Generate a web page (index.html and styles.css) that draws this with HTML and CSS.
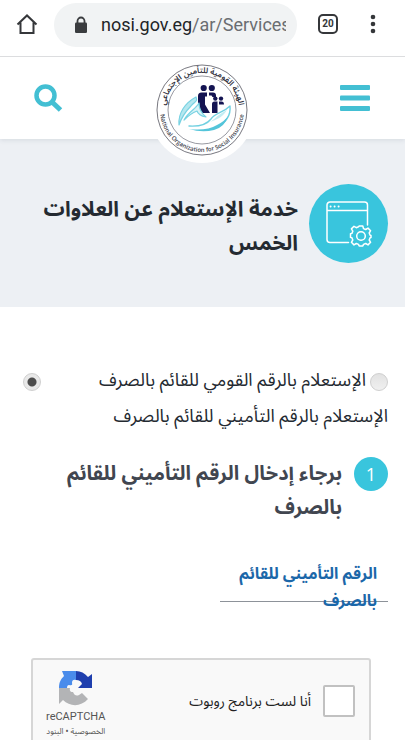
FILE: index.html
```html
<!DOCTYPE html>
<html lang="ar" dir="rtl">
<head>
<meta charset="utf-8">
<meta name="viewport" content="width=device-width, initial-scale=1">
<title>خدمة الإستعلام عن العلاوات الخمس</title>
<link rel="stylesheet" href="styles.css">
</head>
<body>
<div class="browser-bar" dir="ltr">
  <button class="bar-button" type="button" aria-label="Home">
    <svg width="24" height="24" viewBox="0 0 24 24"><path d="M2.500 12.500 12 3.500l9.500 9M5.500 10.500V21h13V10.500" fill="none" stroke="#35373a" stroke-width="2"/></svg>
  </button>
  <a class="address" href="#">
    <svg class="lock" width="14" height="18" viewBox="0 0 14 18"><path d="M3.500 7V5a3.500 3.500 0 0 1 7 0v2" fill="none" stroke="#3a3c3f" stroke-width="1.800"/><rect x="1" y="6.500" width="12" height="10.500" rx="1.300" fill="#3a3c3f"/></svg>
    <span class="url">nosi.gov.eg<span class="url-path">/ar/Services</span></span>
  </a>
  <button class="tab-count" type="button" aria-label="Tabs">20</button>
  <button class="bar-button bar-more" type="button" aria-label="More">
    <svg width="6" height="20" viewBox="0 0 6 20"><g fill="#35373a"><circle cx="3" cy="3" r="2.300"/><circle cx="3" cy="10" r="2.300"/><circle cx="3" cy="17" r="2.300"/></g></svg>
  </button>
</div>

<div class="page">
  <header class="site-header">
    <button class="bar-button" type="button" aria-label="القائمة">
      <svg width="30" height="26" viewBox="0 0 30 26"><g fill="#43bfd3"><rect width="30" height="5" rx="1"/><rect y="10.500" width="30" height="5" rx="1"/><rect y="21" width="30" height="5" rx="1"/></g></svg>
    </button>
    <a class="logo" href="#" aria-label="الهيئة القومية للتأمين الاجتماعي">
      <svg class="logo-art" viewBox="0 0 92 92" direction="ltr">
        <defs>
          <path id="arc-top" d="M9 46A37 37 0 1 1 83 46"/>
          <path id="arc-bottom" d="M4 46A42 42 0 0 0 88 46"/>
        </defs>
        <circle cx="46" cy="46" r="45" fill="#fff" stroke="#55565f" stroke-width=".8"/>
        <circle cx="46" cy="46" r="34" fill="none" stroke="#6c6d78" stroke-width=".7"/>
        <text class="logo-arabic" text-anchor="middle"><textPath href="#arc-top" startOffset="50%">الهيئة القومية للتأمين الإجتماعي</textPath></text>
        <text class="logo-latin" text-anchor="middle"><textPath href="#arc-bottom" startOffset="50%">National Organization for Social Insurance</textPath></text>
        <g fill="#141452">
          <circle cx="47.700" cy="24" r="3.100"/><circle cx="55.800" cy="24" r="3.100"/>
          <path d="M42 41v-9q0-3.500 3.500-3.500H51v4h-2v8l5 8.500h-8z"/>
          <path d="M53 28.500h4q3 0 3 3v1.500h-3.500l-1-1.500H53z"/>
          <circle cx="59.300" cy="34.600" r="2.200"/><circle cx="65" cy="34.600" r="2.200"/>
          <path d="M56 49V40q0-2.500 2.500-2.500h3V49zM63 37.500h2.500q2.500 0 2.500 3h-5z"/>
        </g>
        <g fill="none" stroke-linecap="round" stroke-linejoin="round">
          <path d="M23 61C22 49 29 39 40 33c2 5-1 4-5 9-5 5-9 10-12 19z" fill="#b5e7ef" stroke="#78d2e2" stroke-width="1.200"/>
          <path d="M28 56c4-8 12-11 15-17 0 6 2 10 7 14-5-1-8-3-9-6-5 2-8 4-13 9z" fill="#d9f3f7" stroke="#78d2e2" stroke-width="1.200"/>
          <path d="M33 62q16 1 22-7c4-6 12-6 19-13 1 9-4 17-13 21" stroke="#70d0e1" stroke-width="1.400"/>
          <path d="M51 59c6-1 8-7 20-13-3 5-7 9-20 13z" fill="#c3edf3"/>
          <path d="M33 65q18 2 28-4 8-4 11-9-3 11-14 14-12 3-25-1z" fill="#54c5da"/>
        </g>
      </svg>
    </a>
    <button class="bar-button" type="button" aria-label="بحث">
      <svg width="29" height="29" viewBox="0 0 29 29" fill="none" stroke="#43bfd3"><circle cx="11.500" cy="11.500" r="9" stroke-width="4.500"/><path d="m18 18 8.500 8" stroke-width="5"/></svg>
    </button>
  </header>

  <section class="hero">
    <span class="hero-icon">
      <svg width="46" height="46" viewBox="0 0 46 46" fill="none" stroke="#fff" stroke-width="1.500" stroke-linejoin="round" stroke-linecap="round">
        <path d="M22.500 41.500H4a3 3 0 0 1-3-3V4a3 3 0 0 1 3-3h34.500a3 3 0 0 1 3 3v20M1 9.500h40.500"/>
        <path d="M4.500 5.500h.2M8.500 5.500h.2M12.500 5.500h.2" stroke-width="1.800"/>
        <circle cx="35" cy="35" r="4.300"/>
        <path d="M33.200 25h3.600l.7 2.600 2.200.9 2.300-1.400 2.600 2.600-1.400 2.300.9 2.200.9.200v2.200l-.9.200-.9 2.200 1.400 2.300-2.600 2.600-2.300-1.400-2.200.9-.7 1.600h-3.600l-.7-1.600-2.200-.9-2.300 1.400-2.600-2.600 1.400-2.300-.9-2.200-1.400-.4v-3.600l1.400-.4.900-2.200-1.400-2.300 2.600-2.600 2.300 1.400 2.200-.9z"/>
      </svg>
    </span>
    <h1 class="hero-title">خدمة الإستعلام عن العلاوات الخمس</h1>
  </section>

  <main class="content">
    <form class="form">
      <fieldset class="choices">
        <input class="radio" type="radio" name="method" id="by-national">
        <label class="choice" for="by-national">الإستعلام بالرقم القومي للقائم بالصرف</label>
        <input class="radio" type="radio" name="method" id="by-insurance" checked>
        <label class="choice choice-wide" for="by-insurance">الإستعلام بالرقم التأميني للقائم بالصرف</label>
      </fieldset>

      <div class="step">
        <span class="step-number">1</span>
        <h2 class="step-title">برجاء إدخال الرقم التأميني للقائم بالصرف</h2>
      </div>

      <div class="field">
        <label class="field-label" for="insurance-number">الرقم التأميني للقائم بالصرف</label>
        <input class="field-input" type="text" id="insurance-number">
      </div>

      <div class="captcha">
        <input class="captcha-box" type="checkbox" id="not-robot">
        <label class="captcha-label" for="not-robot">أنا لست برنامج روبوت</label>
        <div class="captcha-brand">
          <svg width="36" height="36" viewBox="0 0 36 36">
            <path d="M1 18C1 12 3 9 6 6L4 1h14v9q-4-1-4 3 1 3-3 2-2 0-2 3z" fill="#4a8ceb"/>
            <path d="M18 1q7 0 12 6l4-3v14H20l4-4q-1-4-6-4z" fill="#1f3fae"/>
            <path d="M1 18h11q-1 4 3 4 2 5 6 3l3-2 6 6C23 37 12 37 5 30l-4 4z" fill="#b3b4b6"/>
          </svg>
          <span class="captcha-name">reCAPTCHA</span>
          <span class="captcha-links"><a href="#">الخصوصية</a> • <a href="#">البنود</a></span>
        </div>
      </div>
    </form>
  </main>
</div>
</body>
</html>
```
FILE: styles.css
```css
* {
  box-sizing: border-box;
}

body {
  margin: 0;
  height: 100vh;
  display: flex;
  flex-direction: column;
  overflow: hidden;
  background: #fff;
  color: #242a31;
  font-family: "Noto Sans Arabic", "DejaVu Sans", sans-serif;
}

a {
  color: inherit;
  text-decoration: none;
}

button {
  padding: 0;
  border: 0;
  background: none;
  font: inherit;
}

svg {
  display: block;
}

/* Browser toolbar */
.browser-bar {
  flex: none;
  display: flex;
  align-items: center;
  height: 56px;
  padding: 0 29px 8px 15px;
  font-family: Roboto, sans-serif;
}

.address {
  flex: 1;
  min-width: 0;
  display: flex;
  align-items: center;
  gap: 13px;
  height: 44px;
  margin: 2px 21px 0 15px;
  padding: 0 11px 0 20px;
  border-radius: 22px;
  background: #f1f3f4;
}

.lock {
  flex: none;
}

.url {
  overflow: hidden;
  white-space: nowrap;
  color: #222427;
  font-size: 18px;
  line-height: 28px;
}

.url-path {
  color: #6a6d71;
}

.tab-count {
  width: 20px;
  height: 20px;
  border: 2px solid #35373a;
  border-radius: 5px;
  color: #35373a;
  font-size: 10px;
  font-weight: 700;
  line-height: 16px;
}

.bar-more {
  margin-left: 32px;
}

/* Page */
.page {
  flex: 1;
  min-height: 0;
  overflow: hidden;
  border-top: 1px solid #dcdddf;
}

.site-header {
  position: relative;
  z-index: 1;
  display: flex;
  align-items: center;
  justify-content: space-between;
  height: 82px;
  padding: 0 35px 0 34px;
  background: #fff;
  box-shadow: 0 1px 5px rgba(40, 60, 80, 0.12);
}

.logo {
  align-self: flex-start;
  padding: 7px;
  border-radius: 50%;
  background: #fff;
}

.logo-art {
  width: 92px;
  height: 92px;
}

.logo-arabic {
  fill: #30313d;
  font-size: 8px;
  font-weight: 600;
}

.logo-latin {
  fill: #41424d;
  font-family: "Open Sans", sans-serif;
  font-size: 6px;
  font-weight: 600;
}

.hero {
  display: flex;
  align-items: flex-start;
  gap: 11px;
  min-height: 168px;
  padding: 45px 17px 24px;
  background: #edf0f4;
}

.hero-icon {
  flex: none;
  display: grid;
  place-items: center;
  width: 79px;
  height: 79px;
  border-radius: 50%;
  background: #39c5dd;
}

.hero-title {
  margin: 8px 0 0;
  font-size: 21px;
  font-weight: 700;
  line-height: 34px;
}

.content {
  padding: 55px 17px 24px;
}

.choices {
  display: grid;
  grid-template-columns: auto 1fr auto;
  align-items: center;
  column-gap: 4px;
  margin: 0;
  padding: 0 0 0 6px;
  border: 0;
}

.radio {
  appearance: none;
  width: 18px;
  height: 18px;
  margin: 4px 0 0;
  border: 1px solid #cfcfcf;
  border-radius: 50%;
  background: linear-gradient(#e2e2e2, #f0f0f0);
}

.radio:checked {
  background: radial-gradient(circle, #4d4d4d 4px, #e9e9e9 5px);
}

.choice {
  font-size: 18px;
  line-height: 36px;
}

.choice-wide {
  grid-column: 1 / -1;
}

.step {
  display: flex;
  align-items: flex-start;
  gap: 12px;
  margin-top: 23px;
}

.step-number {
  flex: none;
  width: 34px;
  height: 34px;
  border-radius: 50%;
  background: #39c5dd;
  color: #fff;
  font-family: "Open Sans", sans-serif;
  font-size: 18px;
  line-height: 34px;
  text-align: center;
}

.step-title {
  margin: 0;
  color: #414650;
  font-size: 20px;
  font-weight: 700;
  line-height: 34px;
}

.field {
  position: relative;
  display: flex;
  align-items: flex-end;
  width: 168px;
  height: 44px;
  margin-top: 33px;
}

.field-label {
  position: absolute;
  top: 3px;
  right: 11px;
  width: 148px;
  color: #1b67a9;
  font-size: 16px;
  font-weight: 700;
  line-height: 27px;
}

.field-input {
  width: 100%;
  height: 36px;
  border: 0;
  border-bottom: 1px solid #8d9299;
  background: transparent;
}

.captcha {
  display: flex;
  align-items: center;
  height: 86px;
  margin: 56px 17px 0 14px;
  padding: 0 14px 0 13px;
  border: 2px solid #d6d6d6;
  border-radius: 3px;
  background: #f9f9f9;
}

.captcha-box {
  appearance: none;
  flex: none;
  width: 32px;
  height: 32px;
  margin: 0;
  border: 2px solid #c1c1c1;
  border-radius: 2px;
  background: #fff;
}

.captcha-label {
  flex: 1;
  padding-right: 12px;
  color: #222;
  font-size: 14px;
}

.captcha-brand {
  display: flex;
  flex-direction: column;
  align-items: center;
  margin-top: 6px;
  color: #555;
}

.captcha-name {
  margin-top: 3px;
  font-family: Roboto, sans-serif;
  font-size: 11px;
  line-height: 16px;
}

.captcha-links {
  font-size: 8px;
  line-height: 14px;
}
```
